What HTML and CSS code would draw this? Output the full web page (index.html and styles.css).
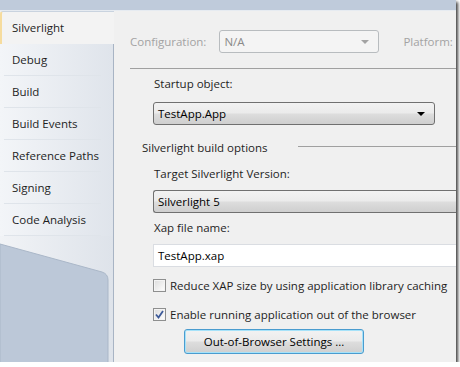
FILE: index.html
```html
<!DOCTYPE html>
<html lang="en">
<head>
  <meta charset="UTF-8" />
  <title>Project Properties</title>
  <link rel="stylesheet" href="styles.css">
</head>
<body>
  <div class="window">
    <div class="topbar"></div>
    <div class="main">
      <div class="sidebar">
        <div class="tab active">Silverlight</div>
        <div class="tab">Debug</div>
        <div class="tab">Build</div>
        <div class="tab">Build Events</div>
        <div class="tab">Reference Paths</div>
        <div class="tab">Signing</div>
        <div class="tab">Code Analysis</div>
        <div class="filler">
          <svg width="113" height="130" viewBox="0 0 113 130">
            <path d="M0 8 L102 36 Q108 38 108 44 L108 130 L0 130 Z" fill="#bcc8d8" stroke="#aab7c8" stroke-width="1" />
          </svg>
        </div>
      </div>

      <div class="content">
        <div class="config-row">
          <span class="muted">Configuration:</span>
          <div class="combo disabled config-combo">N/A<span class="arrow"></span></div>
          <span class="muted">Platform:</span>
        </div>
        <div class="rule"></div>

        <div class="field startup">
          <div class="label">Startup object:</div>
          <div class="combo startup-combo">TestApp.App<span class="arrow"></span></div>
        </div>

        <div class="group-title">
          <span>Silverlight build options</span>
          <div class="group-line"></div>
        </div>

        <div class="field version">
          <div class="label">Target Silverlight Version:</div>
          <div class="combo wide-combo">Silverlight 5</div>
        </div>

        <div class="field xap">
          <div class="label">Xap file name:</div>
          <div class="textbox">TestApp.xap</div>
        </div>

        <div class="check-row">
          <span class="checkbox"></span>
          <span>Reduce XAP size by using application library caching</span>
        </div>
        <div class="check-row">
          <span class="checkbox checked">
            <svg width="9" height="9" viewBox="0 0 9 9"><path d="M1 4.5 L3.5 7.5 L8 1" fill="none" stroke="#3d5a99" stroke-width="1.8" /></svg>
          </span>
          <span>Enable running application out of the browser</span>
        </div>

        <div class="button-row">
          <button class="button">Out-of-Browser Settings ...</button>
        </div>
      </div>
    </div>
  </div>
</body>
</html>
```

FILE: styles.css
```css
body {
  margin: 0;
  background: #ffffff;
  font-family: 'Segoe UI', 'Open Sans', sans-serif;
  font-size: 11.5px;
  color: #1e1e1e;
}
.window {
  width: 456px;
  height: 362px;
  background: #f0f0f0;
  box-shadow: 2px 2px 3px rgba(0, 0, 0, 0.75);
  overflow: hidden;
  display: flex;
  flex-direction: column;
}
.topbar {
  height: 10px;
  background: #bfcbdb;
  border-bottom: 1px solid #e6ebf1;
  flex-shrink: 0;
}
.main {
  display: flex;
  flex: 1;
}
.sidebar {
  width: 114px;
  display: flex;
  flex-direction: column;
  flex-shrink: 0;
}
.tab {
  height: 32px;
  line-height: 31px;
  padding-left: 12px;
  box-sizing: border-box;
  background: linear-gradient(to right, #f3f5f8, #dfe4eb);
  border-right: 1px solid #a8b4c4;
  position: relative;
}
.tab::after {
  content: '';
  position: absolute;
  left: 4px;
  right: 12px;
  bottom: 0;
  height: 1px;
  background: #dfe4ea;
}
.tab.active {
  height: 33px;
  line-height: 31px;
  background: #f3f3f3;
  border-right: none;
  border-left: 2px solid #f6dc9e;
  border-top: 1px solid #c9d3df;
  border-top-left-radius: 3px;
  padding-left: 10px;
}
.tab.active::after {
  display: none;
}
.filler {
  flex: 1;
  background: linear-gradient(to right, #f1f3f6, #dee3ea);
  border-right: 1px solid #a8b4c4;
  overflow: hidden;
}
.filler svg {
  display: block;
}
.content {
  flex: 1;
  display: flex;
  flex-direction: column;
  padding-left: 16px;
}
.muted {
  color: #a3a3a3;
}
.config-row {
  display: flex;
  align-items: center;
  margin-top: 19px;
  height: 23px;
}
.config-combo {
  width: 160px;
  margin: 0 24px 0 13px;
}
.combo {
  position: relative;
  height: 23px;
  line-height: 21px;
  box-sizing: border-box;
  padding-left: 4px;
  border: 1px solid #707070;
  border-radius: 3px;
  background: linear-gradient(to bottom, #f2f2f2 0%, #ebebeb 48%, #dddddd 52%, #cfcfcf 100%);
  color: #000;
}
.combo.disabled {
  border-color: #b8bcbf;
  background: #f4f4f4;
  color: #8a8a8a;
}
.arrow {
  position: absolute;
  right: 9px;
  top: 9px;
  width: 0;
  height: 0;
  border-left: 4px solid transparent;
  border-right: 4px solid transparent;
  border-top: 4px solid #000;
}
.combo.disabled .arrow {
  border-top-color: #a3a3a3;
}
.rule {
  height: 1px;
  background: #a0a0a0;
  margin-top: 15px;
}
.field {
  display: flex;
  flex-direction: column;
  padding-left: 23px;
}
.label {
  height: 16px;
  line-height: 16px;
  margin-top: 7px;
  margin-bottom: 8px;
  padding-left: 1px;
}
.startup .label {
  margin-bottom: 10px;
}
.version .label {
  margin-top: 11px;
}
.startup-combo {
  width: 282px;
}
.wide-combo {
  width: 320px;
  border-right: none;
  border-top-right-radius: 0;
  border-bottom-right-radius: 0;
}
.group-title {
  display: flex;
  align-items: center;
  margin-top: 14px;
  padding-left: 12px;
  height: 16px;
}
.group-line {
  flex: 1;
  height: 1px;
  background: #a0a0a0;
  margin-left: 30px;
  margin-top: -1px;
}
.textbox {
  width: 320px;
  height: 23px;
  line-height: 21px;
  box-sizing: border-box;
  padding-left: 4px;
  background: #fff;
  border: 1px solid #dadde2;
  border-right: none;
  color: #000;
}
.check-row {
  display: flex;
  align-items: center;
  gap: 4px;
  margin-top: 10px;
  padding-left: 23px;
  height: 16px;
  white-space: nowrap;
}
.check-row + .check-row {
  margin-top: 13px;
}
.checkbox {
  width: 13px;
  height: 13px;
  flex-shrink: 0;
  box-sizing: border-box;
  border: 1px solid #8e8f8f;
  background: linear-gradient(135deg, #dcdcdc, #ffffff);
  box-shadow: inset 0 0 0 1px #f4f4f4;
  display: flex;
  align-items: center;
  justify-content: center;
}
.button-row {
  padding-left: 54px;
  margin-top: 7px;
}
.button {
  width: 180px;
  height: 25px;
  font-family: 'Segoe UI', 'Open Sans', sans-serif;
  font-size: 11.5px;
  color: #000;
  border: 1px solid #4a9ccf;
  border-radius: 3px;
  background: linear-gradient(to bottom, #f2f2f2 0%, #ebebeb 48%, #dddddd 52%, #cfcfcf 100%);
  box-shadow: inset 0 0 0 1px #a6e2f9;
  padding: 0;
}
```
